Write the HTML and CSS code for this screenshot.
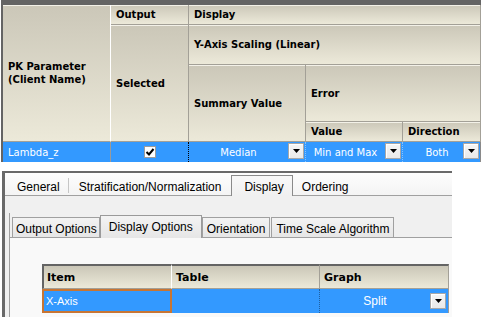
FILE: index.html
```html
<!DOCTYPE html>
<html lang="en">
  <head>
    <meta charset="UTF-8" />
    <title>PK Parameter Display</title>
    <link rel="stylesheet" href="styles.css">
  </head>
  <body>
    <div class="pk-grid">
      <div class="hd pk">PK Parameter<br>(Client Name)</div>
      <div class="hd out">Output</div>
      <div class="hd disp">Display</div>
      <div class="hd sel">Selected</div>
      <div class="hd yaxis">Y-Axis Scaling (Linear)</div>
      <div class="hd summ">Summary Value</div>
      <div class="hd err">Error</div>
      <div class="hd val">Value</div>
      <div class="hd dir">Direction</div>

      <div class="cell name">Lambda_z</div>
      <div class="cell check">
        <span class="checkbox">
          <svg width="10" height="10" viewBox="0 0 10 10"><path d="M1.5 5 L4 7.5 L8.5 2" fill="none" stroke="#000" stroke-width="2"/></svg>
        </span>
      </div>
      <div class="cell combo">
        <span class="combo-text">Median</span>
        <span class="drop"><svg width="7" height="4" viewBox="0 0 7 4"><path d="M0 0h7L3.5 4z"/></svg></span>
      </div>
      <div class="cell combo">
        <span class="combo-text">Min and Max</span>
        <span class="drop"><svg width="7" height="4" viewBox="0 0 7 4"><path d="M0 0h7L3.5 4z"/></svg></span>
      </div>
      <div class="cell combo last">
        <span class="combo-text">Both</span>
        <span class="drop"><svg width="7" height="4" viewBox="0 0 7 4"><path d="M0 0h7L3.5 4z"/></svg></span>
      </div>
    </div>

    <div class="dialog">
      <div class="tabs outer">
        <span class="tab first">General</span>
        <span class="sep"></span>
        <span class="tab strat">Stratification/Normalization</span>
        <span class="tab active">Display</span>
        <span class="tab order">Ordering</span>
      </div>
      <div class="outer-page">
        <div class="tabs inner">
          <span class="itab t-output">Output Options</span>
          <span class="itab active">Display Options</span>
          <span class="itab t-orient">Orientation</span>
          <span class="itab t-time">Time Scale Algorithm</span>
        </div>
        <div class="inner-page">
          <div class="item-grid">
            <div class="ihd first">Item</div>
            <div class="ihd">Table</div>
            <div class="ihd">Graph</div>
            <div class="icell focus">X-Axis</div>
            <div class="icell table"></div>
            <div class="icell combo">
              <span class="combo-text">Split</span>
              <span class="drop big"><svg width="7" height="4" viewBox="0 0 7 4"><path d="M0 0h7L3.5 4z"/></svg></span>
            </div>
          </div>
        </div>
      </div>
    </div>
  </body>
</html>
```

FILE: styles.css
```css
* {
  margin: 0;
  padding: 0;
  box-sizing: border-box;
}

body {
  width: 484px;
  height: 317px;
  overflow: hidden;
  background-color: #fff;
  font-family: "DejaVu Sans", Verdana, sans-serif;
  font-size: 10px;
}

/* top grid */
.pk-grid {
  display: grid;
  grid-template-columns: 108px 78px 117px 97px 78px;
  grid-template-rows: 20px 40px 57px 20px 20px;
  width: max-content;
  margin-left: 1px;
  border-top: 5px solid #646464;
  border-left: 2px solid #646464;
}

.hd {
  display: flex;
  align-items: center;
  padding-left: 5px;
  font-weight: bold;
  line-height: 13px;
  color: #000;
  background: linear-gradient(#cbc7b8, #ece9d9);
  border-right: 1px solid #a3a097;
  border-bottom: 1px solid #a3a097;
  box-shadow: inset 0 1px 0 #f3f1e8;
}

.pk { grid-row: 1 / 5; grid-column: 1; border-right-color: #fff; }
.out { grid-row: 1; grid-column: 2; }
.disp { grid-row: 1; grid-column: 3 / 6; }
.sel { grid-row: 2 / 5; grid-column: 2; }
.yaxis { grid-row: 2; grid-column: 3 / 6; }
.summ { grid-row: 3 / 5; grid-column: 3; }
.err { grid-row: 3; grid-column: 4 / 6; }
.val { grid-row: 4; grid-column: 4; }
.dir { grid-row: 4; grid-column: 5; }

.cell {
  display: flex;
  align-items: center;
  background-color: #3399ff;
  color: #fff;
  border-right: 1px dotted #8cc3fb;
}

.cell.name {
  padding-left: 5px;
  border-right: 1px solid #9a9a9a;
}

.cell.check {
  justify-content: center;
  border-right: 1px dotted #000;
}

.checkbox {
  display: flex;
  align-items: center;
  justify-content: center;
  width: 12px;
  height: 12px;
  background-color: #fff;
  border: 1px solid #9c9c9c;
}

.combo-text {
  flex: 1;
  text-align: center;
}

.cell.last {
  padding-left: 8px;
  border-right: 1px solid #8a8a8a;
}

.drop {
  display: flex;
  align-items: center;
  justify-content: center;
  width: 16px;
  height: 16px;
  margin-right: 1px;
  background: linear-gradient(#f6f6f6, #e9e9e9);
  border: 1px solid #a8a8a8;
  box-shadow: inset 1px 1px 0 #fff;
}

.cell .drop {
  align-self: flex-start;
  margin-top: 1px;
}

/* bottom dialog */
.dialog {
  width: 450px;
  height: 146px;
  margin: 9px 0 0 2px;
  background-color: #f0f0f0;
  border-top: 2px solid #696969;
  border-left: 3px solid #696969;
  font-family: "Liberation Sans", Arial, sans-serif;
  font-size: 12px;
  color: #000;
}

.tabs {
  display: flex;
  align-items: flex-end;
}

.tabs.outer {
  height: 23px;
  background: linear-gradient(#fdfdfd, #f4f4f4);
  border-bottom: 1px solid #a0a0a0;
}

.tab {
  line-height: 16px;
  white-space: nowrap;
}

.tab.first { padding: 0 8px 0 12px; }
.tab.strat { padding: 0 10px 0 10px; }
.tab.order { padding: 0 0 0 9px; }

.tab.active {
  padding: 3px 8px 1px 12px;
  margin-bottom: -1px;
  background: linear-gradient(#f8f8f8, #f0f0f0);
  border: 1px solid #8a8a8a;
  border-bottom: none;
}

.sep {
  width: 1px;
  height: 15px;
  margin-bottom: 2px;
  background-color: #c6c6c6;
}

.outer-page {
  padding: 17px 0 0 4px;
}

.tabs.inner {
  height: 24px;
  border-left: 1px solid #a0a0a0;
  padding-left: 2px;
}

.itab {
  line-height: 16px;
  white-space: nowrap;
  padding: 3px 4px 0;
  background: linear-gradient(#f3f3f3, #e6e6e6);
  border: 1px solid #a0a0a0;
  border-bottom: none;
}

.itab.t-output { padding: 3px 2px 0 3px; }
.itab.t-time { margin-left: 1px; }

.itab.active {
  padding: 3px 8px;
  margin: 0 0 -1px 0;
  background-color: #fcfcfc;
  border-color: #9a9a9a;
}

.inner-page {
  height: 90px;
  padding: 26px 0 0 32px;
  background-color: #f9f9f9;
  border-top: 1px solid #a0a0a0;
  border-left: 1px solid #a0a0a0;
}

.item-grid {
  display: grid;
  grid-template-columns: 130px 148px 129px;
  grid-template-rows: 25px 24px;
  width: max-content;
}

.ihd {
  display: flex;
  align-items: center;
  padding-left: 4px;
  font-family: "DejaVu Sans", Verdana, sans-serif;
  font-size: 11px;
  font-weight: bold;
  background: linear-gradient(#cbc7b8, #ece9d9);
  border-top: 2px solid #646464;
  border-right: 1px solid #a3a097;
  border-bottom: 1px solid #a3a097;
}

.ihd.first {
  padding-left: 3px;
  border-left: 2px solid #646464;
  border-right-color: #fff;
}

.icell {
  display: flex;
  align-items: center;
  background-color: #3399ff;
  color: #fff;
  font-size: 11px;
}

.icell.focus {
  padding-left: 2px;
  border: 2px solid #c87533;
}

.icell.table {
  border-right: 1px dotted #1f5fa0;
}

.icell.combo {
  border-right: 1px solid #9a9a9a;
}

.icell .combo-text {
  font-size: 12px;
}

.drop.big {
  margin-right: 2px;
}
```
